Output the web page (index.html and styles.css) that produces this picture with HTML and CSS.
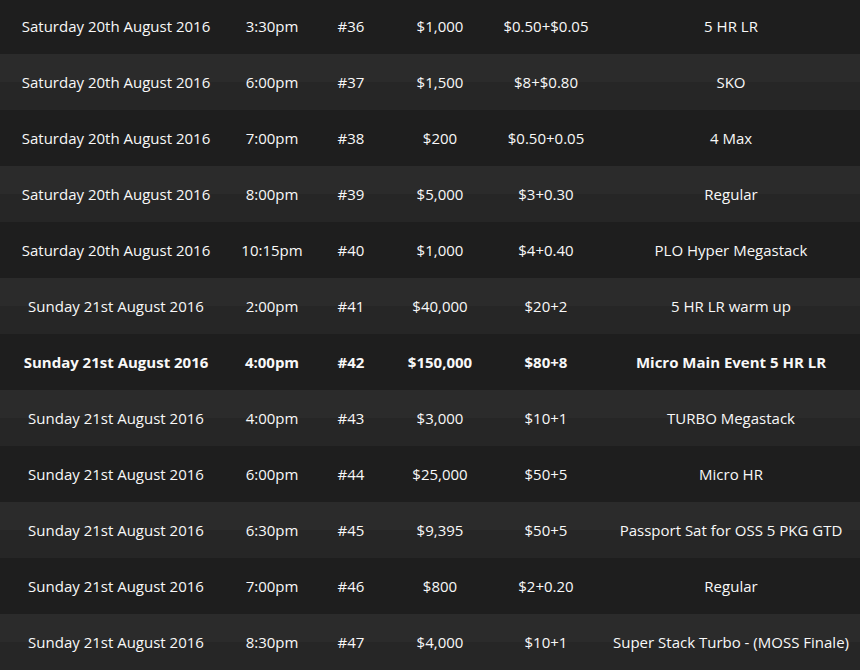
FILE: index.html
```html
<!DOCTYPE html>
<html>
<head>
<meta charset="utf-8">
<link rel="stylesheet" href="styles.css">
</head>
<body>
<table class="schedule">
<colgroup>
<col class="c-date"><col class="c-time"><col class="c-num"><col class="c-prize"><col class="c-buyin"><col class="c-name">
</colgroup>
<tbody>
<tr><td>Saturday 20th August 2016</td><td>3:30pm</td><td>#36</td><td>$1,000</td><td>$0.50+$0.05</td><td>5 HR LR</td></tr>
<tr><td>Saturday 20th August 2016</td><td>6:00pm</td><td>#37</td><td>$1,500</td><td>$8+$0.80</td><td>SKO</td></tr>
<tr><td>Saturday 20th August 2016</td><td>7:00pm</td><td>#38</td><td>$200</td><td>$0.50+0.05</td><td>4 Max</td></tr>
<tr><td>Saturday 20th August 2016</td><td>8:00pm</td><td>#39</td><td>$5,000</td><td>$3+0.30</td><td>Regular</td></tr>
<tr><td>Saturday 20th August 2016</td><td>10:15pm</td><td>#40</td><td>$1,000</td><td>$4+0.40</td><td>PLO Hyper Megastack</td></tr>
<tr><td>Sunday 21st August 2016</td><td>2:00pm</td><td>#41</td><td>$40,000</td><td>$20+2</td><td>5 HR LR warm up</td></tr>
<tr class="main"><td>Sunday 21st August 2016</td><td>4:00pm</td><td>#42</td><td>$150,000</td><td>$80+8</td><td>Micro Main Event 5 HR LR</td></tr>
<tr><td>Sunday 21st August 2016</td><td>4:00pm</td><td>#43</td><td>$3,000</td><td>$10+1</td><td>TURBO Megastack</td></tr>
<tr><td>Sunday 21st August 2016</td><td>6:00pm</td><td>#44</td><td>$25,000</td><td>$50+5</td><td>Micro HR</td></tr>
<tr><td>Sunday 21st August 2016</td><td>6:30pm</td><td>#45</td><td>$9,395</td><td>$50+5</td><td>Passport Sat for OSS 5 PKG GTD</td></tr>
<tr><td>Sunday 21st August 2016</td><td>7:00pm</td><td>#46</td><td>$800</td><td>$2+0.20</td><td>Regular</td></tr>
<tr><td>Sunday 21st August 2016</td><td>8:30pm</td><td>#47</td><td>$4,000</td><td>$10+1</td><td>Super Stack Turbo - (MOSS Finale)</td></tr>
</tbody>
</table>
</body>
</html>
```

FILE: styles.css
```css
html, body {
  margin: 0;
  padding: 0;
  background: #1e1e1e;
  overflow: hidden;
}

.schedule {
  width: 860px;
  margin-top: -2px;
  border-collapse: collapse;
  table-layout: fixed;
  font-family: "Open Sans", "Noto Sans", sans-serif;
  font-size: 15px;
  color: #f8f8f8;
}

.c-date { width: 232px; }
.c-time { width: 80px; }
.c-num { width: 78px; }
.c-prize { width: 100px; }
.c-buyin { width: 112px; }
.c-name { width: 258px; }

.schedule td {
  height: 56px;
  padding: 0;
  text-align: center;
  vertical-align: middle;
  white-space: nowrap;
}

.schedule tr:nth-child(odd) {
  background: #1e1e1e;
}

.schedule tr:nth-child(even) {
  background: linear-gradient(#2b2b2b 0, #2b2b2b 50%, #262626 50%, #262626 100%);
}

.schedule tr.main td {
  font-weight: 700;
}
```
